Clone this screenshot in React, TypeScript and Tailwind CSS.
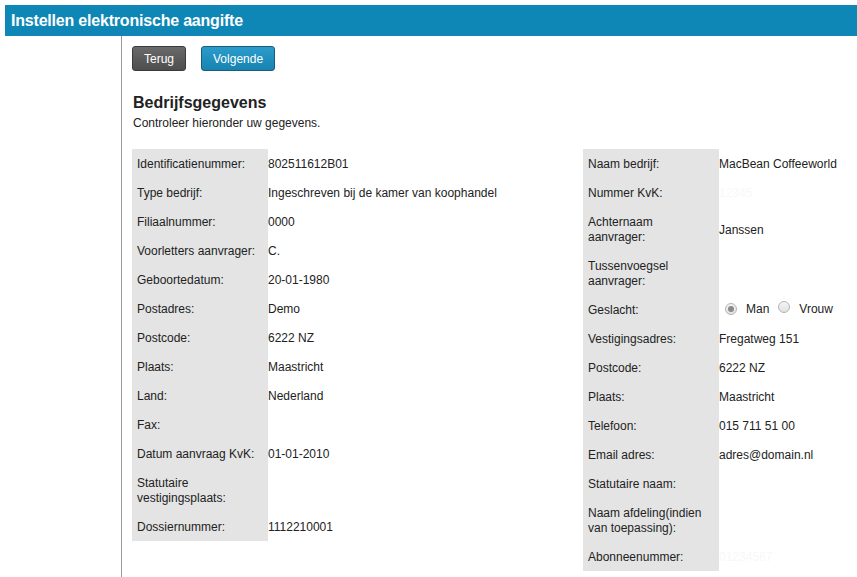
import React from 'react'

interface Row {
  label: string
  value?: React.ReactNode
}

const LEFT_ROWS: Row[] = [
  { label: 'Identificatienummer:', value: '802511612B01' },
  { label: 'Type bedrijf:', value: 'Ingeschreven bij de kamer van koophandel' },
  { label: 'Filiaalnummer:', value: '0000' },
  { label: 'Voorletters aanvrager:', value: 'C.' },
  { label: 'Geboortedatum:', value: '20-01-1980' },
  { label: 'Postadres:', value: 'Demo' },
  { label: 'Postcode:', value: '6222 NZ' },
  { label: 'Plaats:', value: 'Maastricht' },
  { label: 'Land:', value: 'Nederland' },
  { label: 'Fax:' },
  { label: 'Datum aanvraag KvK:', value: '01-01-2010' },
  { label: 'Statutaire vestigingsplaats:' },
  { label: 'Dossiernummer:', value: '1112210001' },
]

function Radio({ checked }: { checked?: boolean }) {
  return (
    <span className="inline-flex items-center justify-center w-[12px] h-[12px] rounded-full border border-[#b5b5b5] bg-gradient-to-b from-[#f4f4f4] to-[#e2e2e2]">
      {checked && <span className="w-[6px] h-[6px] rounded-full bg-[#8a8a8a]" />}
    </span>
  )
}

const RIGHT_ROWS: Row[] = [
  { label: 'Naam bedrijf:', value: 'MacBean Coffeeworld' },
  { label: 'Nummer KvK:', value: <span className="text-[#f8f8f8]">12345</span> },
  { label: 'Achternaam aanvrager:', value: 'Janssen' },
  { label: 'Tussenvoegsel aanvrager:' },
  {
    label: 'Geslacht:',
    value: (
      <span className="flex items-center ml-[6px] -mt-[3px]">
        <Radio checked />
        <span className="ml-[9px]">Man</span>
        <span className="ml-[9px]"><Radio /></span>
        <span className="ml-[9px]">Vrouw</span>
      </span>
    ),
  },
  { label: 'Vestigingsadres:', value: 'Fregatweg 151' },
  { label: 'Postcode:', value: '6222 NZ' },
  { label: 'Plaats:', value: 'Maastricht' },
  { label: 'Telefoon:', value: '015 711 51 00' },
  { label: 'Email adres:', value: 'adres@domain.nl' },
  { label: 'Statutaire naam:' },
  { label: 'Naam afdeling(indien van toepassing):' },
  { label: 'Abonneenummer:', value: <span className="text-[#f8f8f8]">01234567</span> },
]

function DataTable({ rows, width }: { rows: Row[]; width: string }) {
  return (
    <div className={`flex flex-col ${width}`}>
      {rows.map((row) => (
        <div key={row.label} className="flex">
          <div className="w-[136px] shrink-0 bg-[#e4e4e4] pl-[5px] pr-[10px] pt-[8px] pb-[6px] leading-[15px]">
            {row.label}
          </div>
          <div className="flex items-center pt-[2px] leading-[15px]">{row.value}</div>
        </div>
      ))}
    </div>
  )
}

export default function App() {
  return (
    <div className="min-h-[577px] bg-white text-[12px] text-[#222] pt-[5px] pl-[5px] flex flex-col" style={{ fontFamily: '"Liberation Sans", Arial, sans-serif' }}>
      {/* Title bar */}
      <div className="h-[31px] bg-[#0e87b6] flex items-center pl-[6px]">
        <h1 className="text-white font-bold text-[16px] tracking-[-0.2px]">Instellen elektronische aangifte</h1>
      </div>

      <div className="flex flex-1">
        <div className="w-[117px] shrink-0 border-r border-[#9a9a9a]" />

        <div className="pl-[10px] pt-[10px] flex-1">
          {/* Buttons */}
          <div className="flex gap-[15px]">
            <button className="h-[25px] px-[11px] rounded-[3px] border border-[#3a3a3a] bg-gradient-to-b from-[#6a6a6a] to-[#4e4e4e] text-white text-[12px]">
              Terug
            </button>
            <button className="h-[25px] px-[11px] rounded-[3px] border border-[#1b5d78] bg-gradient-to-b from-[#2a9ccc] to-[#1783b0] text-white text-[12px]">
              Volgende
            </button>
          </div>

          <h2 className="mt-[22px] ml-[1px] text-[16px] font-bold leading-[19px]">Bedrijfsgegevens</h2>
          <p className="mt-[4px] ml-[1px] leading-[15px]">Controleer hieronder uw gegevens.</p>

          <div className="flex mt-[18px]">
            <DataTable rows={LEFT_ROWS} width="w-[451px]" />
            <DataTable rows={RIGHT_ROWS} width="flex-1" />
          </div>
        </div>
      </div>
    </div>
  )
}
